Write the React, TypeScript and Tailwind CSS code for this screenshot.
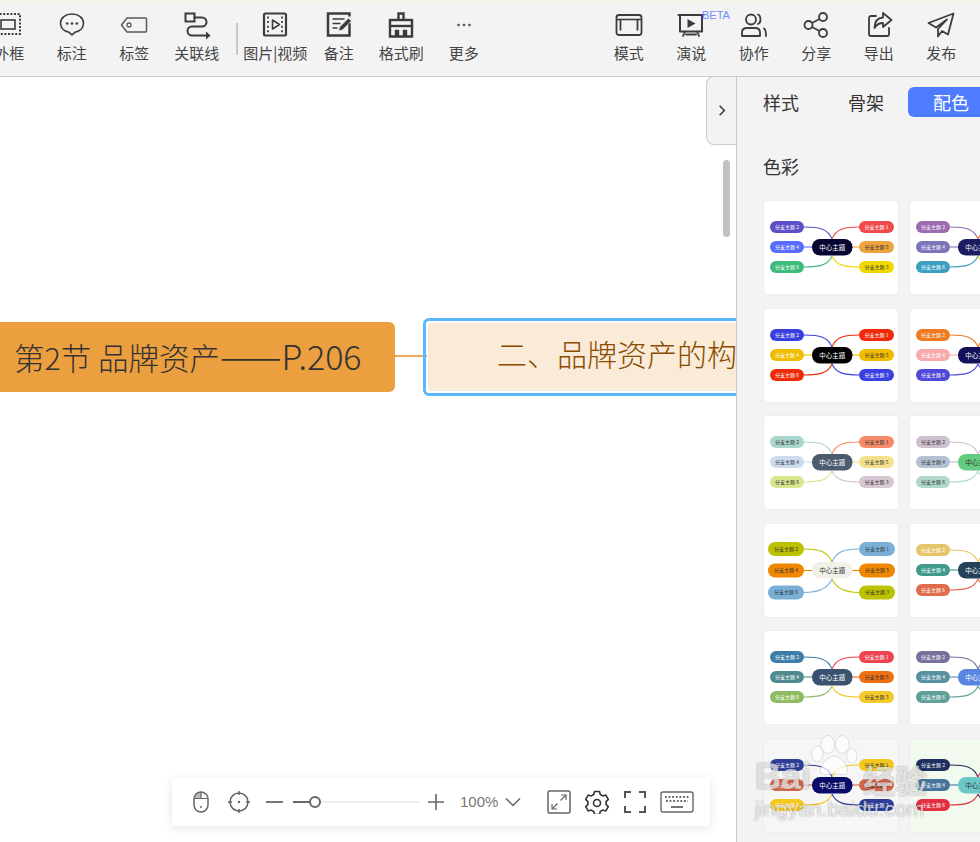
import type { ReactNode } from "react";

type Theme = {
  center: string;
  centerText: string;
  left: string[];
  right: string[];
  leftText?: string;
  rightText?: string[];
  big?: boolean;
  cardBg?: string;
};

const dark = "#333333";

const colOne: Theme[] = [
  { center: "#050530", centerText: "#fff", left: ["#5b50c8", "#5a6cff", "#3dbb7a"], right: ["#f04a4a", "#eda33f", "#f0d800"], rightText: ["#fff", dark, dark] },
  { center: "#000000", centerText: "#fff", left: ["#3a3fe0", "#f0bc00", "#ee2a08"], right: ["#ee2a08", "#f0bc00", "#3a3fe0"], rightText: ["#fff", dark, "#fff"] },
  { center: "#4d5b6e", centerText: "#fff", left: ["#a9d6cd", "#cddcef", "#d8e88e"], right: ["#f78a68", "#f5e08c", "#d8c6d2"], leftText: dark, rightText: [dark, dark, dark] },
  { center: "#f1f1e8", centerText: "#333", left: ["#bcc200", "#ef8800", "#7ab0d8"], right: ["#7ab0d8", "#ef8800", "#bcc200"], leftText: dark, rightText: [dark, dark, dark], big: true },
  { center: "#3a5170", centerText: "#fff", left: ["#3b7ea8", "#4e8a8e", "#8fbb60"], right: ["#ee4450", "#ef7010", "#f5c82c"], rightText: ["#fff", dark, dark] },
  { center: "#0b0b6a", centerText: "#fff", left: ["#2c3e98", "#d4674a", "#f5c820"], right: ["#f5c820", "#d4674a", "#2c3e98"], rightText: [dark, dark, "#fff"], cardBg: "bg-[#f6f6f6]" },
];

const colTwo: Theme[] = [
  { center: "#1c1c60", centerText: "#fff", left: ["#9c6bb0", "#7c74b8", "#3d9fc0"], right: ["#f07a20", "#f0c020", "#f0d800"] },
  { center: "#15105a", centerText: "#fff", left: ["#f07a20", "#f8aaaa", "#5048d8"], right: ["#f07a20", "#f8aaaa", "#5048d8"] },
  { center: "#64cc80", centerText: "#333", left: ["#cfc0d0", "#b4c0d4", "#b0d8cc"], right: ["#cfc0d0", "#b4c0d4", "#b0d8cc"], leftText: dark },
  { center: "#254358", centerText: "#fff", left: ["#e6c468", "#3f9a8c", "#e06c4c"], right: ["#e6c468", "#3f9a8c", "#e06c4c"] },
  { center: "#5b86e0", centerText: "#fff", left: ["#77709c", "#5890a0", "#60a098"], right: ["#77709c", "#5890a0", "#60a098"] },
  { center: "#6cc8c8", centerText: "#333", left: ["#1e2f60", "#45759c", "#e23040"], right: ["#e23040", "#45759c", "#1e2f60"], cardBg: "bg-[#f2f9ee]" },
];

function MiniMap({ t }: { t: Theme }) {
  const rows = t.big ? [25, 46.500, 68.500] : [26, 46, 66];
  const h = t.big ? 14 : 12;
  const lx = t.big ? 4 : 6;
  const lw = t.big ? 36 : 34;
  const rw = t.big ? 36 : 35;
  const labelsL = ["分支主题 2", "分支主题 4", "分支主题 6"];
  const labelsR = ["分支主题 1", "分支主题 5", "分支主题 3"];
  return (
    <svg viewBox="0 0 134 93" className="w-[134px] h-[93px] block">
      <g fill="none" strokeWidth="1.1">
        <path d={`M40 ${rows[0]} C56 ${rows[0]} 64 28 68 38`} stroke={t.left[0]} />
        <path d={`M40 ${rows[1]} L48 ${rows[1]}`} stroke={t.left[1]} />
        <path d={`M40 ${rows[2]} C56 ${rows[2]} 64 64 68 55`} stroke={t.left[2]} />
        <path d={`M95 ${rows[0]} C80 ${rows[0]} 72 28 68 38`} stroke={t.right[0]} />
        <path d={`M88 ${rows[1]} L95 ${rows[1]}`} stroke={t.right[1]} />
        <path d={`M95 ${rows[2]} C80 ${rows[2]} 72 64 68 55`} stroke={t.right[2]} />
      </g>
      {rows.map((y, i) => (
        <g key={i}>
          <rect x={lx} y={y - h / 2} width={lw} height={h} rx={h / 2} fill={t.left[i]} />
          <text x={lx + lw / 2} y={y + 1.8} fontSize="5" textAnchor="middle" fill={t.leftText ?? "#fff"}>{labelsL[i]}</text>
          <rect x={95} y={y - h / 2} width={rw} height={h} rx={h / 2} fill={t.right[i]} />
          <text x={95 + rw / 2} y={y + 1.8} fontSize="5" textAnchor="middle" fill={t.rightText?.[i] ?? "#fff"}>{labelsR[i]}</text>
        </g>
      ))}
      <rect x="48" y="38" width="40.5" height="16.5" rx="8" fill={t.center} />
      <text x="68.2" y="48.6" fontSize="6.5" textAnchor="middle" fill={t.centerText}>中心主题</text>
    </svg>
  );
}

const s = { fill: "none", stroke: "#3c3c3c", strokeWidth: 2, strokeLinecap: "round" as const, strokeLinejoin: "round" as const };

const icons: Record<string, ReactNode> = {
  frame: (
    <>
      <rect x="1" y="3" width="24" height="20" fill="none" stroke="#3c3c3c" strokeWidth="2" strokeDasharray="2 1.6" />
      <rect x="6" y="9" width="14" height="9" fill="none" stroke="#3c3c3c" strokeWidth="1.6" />
    </>
  ),
  note: (
    <>
      <path {...s} strokeWidth={1.6} d="M14 3C7.4 3 2.5 7 2.5 12.3c0 4.6 3.6 8 8.6 9l2.9 2.6 2.9-2.6c5-1 8.600-4.400 8.600-9C25.500 7 20.600 3 14 3z" />
      <circle cx="9.200" cy="12.500" r="1.300" fill="#3c3c3c" />
      <circle cx="14" cy="12.500" r="1.300" fill="#3c3c3c" />
      <circle cx="18.800" cy="12.500" r="1.300" fill="#3c3c3c" />
    </>
  ),
  tag: (
    <>
      <path fill="none" stroke="#5a5a5a" strokeWidth="1.500" strokeLinejoin="round" d="M7 7h18.500a1 1 0 0 1 1 1v12a1 1 0 0 1-1 1H7L1.500 14z" />
      <circle cx="9" cy="14" r="2" fill="none" stroke="#5a5a5a" strokeWidth="1.300" />
    </>
  ),
  link: (
    <>
      <rect x="2.500" y="2.500" width="9" height="8" fill="none" stroke="#3c3c3c" strokeWidth="2" />
      <path {...s} d="M11.500 6.500H19a4.500 4.500 0 0 1 0 9H9a4.500 4.500 0 0 0 0 9h15.500" />
      <path d="M23 20.500l4.500 4-4.500 4z" fill="#3c3c3c" />
    </>
  ),
  video: (
    <>
      <rect x="3" y="2.500" width="22" height="22" rx="1.500" fill="none" stroke="#3c3c3c" strokeWidth="2.200" />
      <path d="M11.500 9l7 4.500-7 4.500z" fill="none" stroke="#3c3c3c" strokeWidth="1.600" strokeLinejoin="round" />
      <path d="M7 5.500v16M21 5.500v16" fill="none" stroke="#3c3c3c" strokeWidth="1.800" strokeDasharray="2 2.600" />
    </>
  ),
  memo: (
    <>
      <path fill="none" stroke="#3c3c3c" strokeWidth="2.500" d="M24.500 12v12.500H3V2.500h21.500v3" />
      <path d="M7.500 8h12M7.500 12.500h8M7.500 17h5" stroke="#3c3c3c" strokeWidth="1.600" fill="none" />
      <path d="M13.500 20l1-4L23.500 7l3 3-9 9z" fill="#3c3c3c" stroke="#f3f3f3" strokeWidth="0.800" />
    </>
  ),
  brush: (
    <>
      <path fill="none" stroke="#3c3c3c" strokeWidth="2.400" d="M11.500 9V2.500h5V9" />
      <rect x="3" y="9" width="22" height="6" fill="none" stroke="#3c3c3c" strokeWidth="2.400" />
      <path fill="none" stroke="#3c3c3c" strokeWidth="2.400" d="M3 15v10.500h6V20h2v5.500h6V20h2v5.500h6V15" />
    </>
  ),
  more: (
    <>
      <circle cx="8.500" cy="14" r="1.300" fill="#555" />
      <circle cx="14" cy="14" r="1.300" fill="#555" />
      <circle cx="19.500" cy="14" r="1.300" fill="#555" />
    </>
  ),
  mode: (
    <>
      <rect x="1.500" y="4" width="25" height="20" rx="2.500" fill="none" stroke="#3c3c3c" strokeWidth="1.800" />
      <path d="M2 8.500h24" stroke="#3c3c3c" strokeWidth="1.600" fill="none" />
      <path d="M5.500 9v10.500M22.500 9v10.500" stroke="#3c3c3c" strokeWidth="1.800" fill="none" />
    </>
  ),
  present: (
    <>
      <path {...s} strokeWidth={2} d="M3 4h22v16.500H3zM1.500 4h25" />
      <path d="M10.500 8l8 4.500-8 4.500z" fill="#3c3c3c" />
      <path {...s} strokeWidth={1.800} d="M8 20.500L6 25M20 20.500l2 4.500M9 23.500h10" />
    </>
  ),
  team: (
    <>
      <circle cx="11" cy="8.500" r="5" fill="none" stroke="#3c3c3c" strokeWidth="1.800" />
      <path {...s} strokeWidth={1.800} d="M2 25v-3.500c0-3 2-4.500 5-4.500h8c3 0 5 1.500 5 4.500V25zM18 3.500c3 1 3.500 8 0 9.500M24 17.500c1.500 1 2 3 2 7.500" />
    </>
  ),
  share: (
    <>
      <circle cx="6.500" cy="14" r="4" fill="none" stroke="#3c3c3c" strokeWidth="1.800" />
      <circle cx="21" cy="6" r="4" fill="none" stroke="#3c3c3c" strokeWidth="1.800" />
      <circle cx="21" cy="22" r="4" fill="none" stroke="#3c3c3c" strokeWidth="1.800" />
      <path d="M10 12l7.500-4M10 16l7.500 4" stroke="#3c3c3c" strokeWidth="1.800" fill="none" />
    </>
  ),
  export: (
    <>
      <path {...s} strokeWidth={1.800} d="M11 5H6a2 2 0 0 0-2 2v16a2 2 0 0 0 2 2h16a2 2 0 0 0 2-2v-6" />
      <path d="M18 2l8.500 7-8.500 7v-4c-4 0-6.500 1.500-8.500 5 0-6 3-10 8.500-10.500z" fill="none" stroke="#3c3c3c" strokeWidth="1.800" strokeLinejoin="round" />
    </>
  ),
  send: (
    <>
      <path {...s} strokeWidth={1.800} d="M26.500 2.500L1.500 12l7.500 4.500L20 8.500l-9 9.500v7.500l4-5.500 6 3.500z" />
    </>
  ),
};

function Tool({ icon, label }: { icon: string; label: string }) {
  return (
    <div className="w-[62.500px] flex flex-col items-center shrink-0">
      <svg viewBox="0 0 28 28" className="w-[28px] h-[28px] overflow-visible">
        {icons[icon]}
      </svg>
      <span className="mt-[4px] text-[15px] leading-[20px] text-[#444] whitespace-nowrap">{label}</span>
    </div>
  );
}

export default function App() {
  return (
    <div className="relative w-[980px] h-[842px] overflow-hidden bg-white flex flex-col font-['Noto_Sans_CJK_SC','Noto_Sans',sans-serif]">
      <header className="h-[77px] shrink-0 bg-[#f3f3f3] border-t-2 border-t-[#f0f8e8] border-b border-b-[#cccccc] flex items-start pt-[9px] overflow-hidden">
        <div className="flex -ml-[22px] shrink-0">
          <Tool icon="frame" label="外框" />
          <Tool icon="note" label="标注" />
          <Tool icon="tag" label="标签" />
          <Tool icon="link" label="关联线" />
        </div>
        <div className="w-[2px] h-[32px] bg-[#c8c8c8] mt-[12px] ml-[8px] mr-[6px] shrink-0" />
        <div className="flex shrink-0">
          <Tool icon="video" label="图片|视频" />
          <div className="flex ml-[1px]">
            <Tool icon="memo" label="备注" />
            <Tool icon="brush" label="格式刷" />
            <Tool icon="more" label="更多" />
          </div>
        </div>
        <div className="flex ml-auto mr-[7.500px] shrink-0">
          <Tool icon="mode" label="模式" />
          <div className="relative">
            <Tool icon="present" label="演说" />
            <span className="absolute left-[42px] top-[-2px] text-[11px] leading-[12px] text-[#6f8dff] font-['Liberation_Sans',sans-serif]">BETA</span>
          </div>
          <Tool icon="team" label="协作" />
          <Tool icon="share" label="分享" />
          <Tool icon="export" label="导出" />
          <Tool icon="send" label="发布" />
        </div>
      </header>

      <div className="flex flex-1 min-h-0">
        <main className="relative flex-1 overflow-hidden bg-white">
          {/* mind map nodes */}
          <div className="absolute left-[-30px] top-[245px] w-[425px] h-[70px] rounded-[6px] bg-[#ec9f3f] flex items-center pl-[44px] pb-[4px]">
            <span className="text-[30.500px] font-light text-[#333] whitespace-nowrap">
              第2节 品牌资产<span className="text-[37px]">——</span><span className="text-[34px]">P.206</span>
            </span>
          </div>
          <div className="absolute left-[395px] top-[278px] w-[32px] h-[2px] bg-[#f0a95c]" />
          <div className="absolute left-[423px] top-[241px] w-[340px] h-[78px] rounded-[6px] border-[3px] border-[#5bb8ff] p-[2px]">
            <div className="h-full rounded-[4px] bg-[#faebd9] flex items-center pl-[69px] pb-[8px]">
              <span className="text-[30px] font-light text-[#8a4b00] whitespace-nowrap">二、品牌资产的构</span>
            </div>
          </div>

          <div className="absolute left-[723px] top-[83px] w-[7px] h-[77px] rounded-full bg-[#c1c1c1]" />

          <div className="absolute left-[706px] top-[-1px] w-[31px] h-[69px] bg-[#f3f3f3] border border-r-0 border-[#cccccc] rounded-l-[8px] flex items-center justify-center">
            <svg viewBox="0 0 10 16" className="w-[8px] h-[13px]">
              <path d="M2 2l6 6-6 6" fill="none" stroke="#333" strokeWidth="1.800" />
            </svg>
          </div>

          {/* bottom zoom bar */}
          <div className="absolute left-[172px] top-[701px] w-[538px] h-[48px] bg-white rounded-[4px] shadow-[0_2px_12px_rgba(0,0,0,0.1)] flex items-center text-[#666]">
            <svg viewBox="0 0 20 24" className="w-[20px] h-[24px] ml-[19px]">
              <path d="M10 2a7 6 0 0 0-7 6h7z" fill="#bbbbbb" />
              <rect x="3" y="2" width="14" height="20" rx="7" fill="none" stroke="#666" strokeWidth="1.500" />
              <path d="M3 8.500h14M10 2v6.500" stroke="#666" strokeWidth="1.200" fill="none" />
              <circle cx="10" cy="17" r="1" fill="#666" />
            </svg>
            <svg viewBox="0 0 24 24" className="w-[24px] h-[24px] ml-[16px]">
              <circle cx="12" cy="12" r="9" fill="none" stroke="#666" strokeWidth="1.500" />
              <path d="M12 1v4M12 19v4M1 12h4M19 12h4" stroke="#666" strokeWidth="1.500" />
              <circle cx="12" cy="12" r="1.200" fill="#666" />
            </svg>
            <div className="w-[17px] h-[2px] bg-[#777] ml-[15px]" />
            <div className="relative w-[127px] h-[2px] bg-[#f0f0f0] ml-[10px]">
              <div className="absolute left-0 top-0 w-[18px] h-[2px] bg-[#666]" />
              <div className="absolute left-[16px] top-[-5px] w-[12px] h-[12px] rounded-full bg-white border-2 border-[#666]" />
            </div>
            <svg viewBox="0 0 16 16" className="w-[16px] h-[16px] ml-[8px]">
              <path d="M8 0v16M0 8h16" stroke="#666" strokeWidth="1.600" />
            </svg>
            <span className="ml-[16px] text-[15px] leading-[20px] text-[#777] font-['Liberation_Sans',sans-serif]">100%</span>
            <svg viewBox="0 0 16 10" className="w-[16px] h-[10px] ml-[7px]">
              <path d="M1 1.500l7 7 7-7" fill="none" stroke="#666" strokeWidth="1.500" />
            </svg>
            <svg viewBox="0 0 24 24" className="w-[24px] h-[24px] ml-[26px]">
              <rect x="1" y="1" width="22" height="22" rx="1.500" fill="none" stroke="#666" strokeWidth="1.500" />
              <path d="M14 5h5v5M19 5l-5.500 5.500M10 19H5v-5M5 19l5.500-5.500" fill="none" stroke="#666" strokeWidth="1.200" />
            </svg>
            <svg viewBox="0 0 24 24" className="w-[24px] h-[24px] ml-[14px]">
              <path d="M9.500 1.500h5l.8 3 2.500 1.400 3-.8 2.500 4.300-2.200 2.200v2.800l2.200 2.200-2.500 4.300-3-.8-2.500 1.400-.8 3h-5l-.8-3-2.500-1.400-3 .8L.7 16.600l2.200-2.200v-2.800L.7 9.400l2.500-4.300 3 .8 2.500-1.400z" fill="none" stroke="#333" strokeWidth="1.600" strokeLinejoin="round" />
              <circle cx="12" cy="13" r="3.500" fill="none" stroke="#333" strokeWidth="1.600" />
            </svg>
            <svg viewBox="0 0 22 22" className="w-[22px] h-[22px] ml-[15px]">
              <path d="M1 7V1h6M15 1h6v6M21 15v6h-6M7 21H1v-6" fill="none" stroke="#555" strokeWidth="2" />
            </svg>
            <svg viewBox="0 0 34 24" className="w-[34px] h-[24px] ml-[14px]">
              <rect x="1" y="2" width="32" height="20" rx="2" fill="none" stroke="#666" strokeWidth="1.400" />
              <path d="M5 7h24M6 11h22" stroke="#666" strokeWidth="1.800" strokeDasharray="1.800 1.800" fill="none" />
              <path d="M11 17h12" stroke="#666" strokeWidth="1.800" fill="none" />
            </svg>
          </div>
        </main>

        <aside className="relative w-[244px] shrink-0 bg-[#f3f3f3] border-l border-l-[#cccccc] overflow-hidden">
          <div className="flex items-center h-[30px] mt-[10px] ml-[26px] text-[18px] text-[#333]">
            <span className="w-[85px] shrink-0">样式</span>
            <span className="w-[60px] shrink-0">骨架</span>
            <span className="w-[86px] shrink-0 h-[30px] rounded-l-[6px] bg-[#4d7cfe] text-white text-center leading-[30px]">配色</span>
          </div>
          <div className="mt-[35px] ml-[26px] text-[18px] leading-[28px] text-[#333]">色彩</div>
          <div className="mt-[21px] ml-[27px] grid grid-cols-[134px_134px] gap-x-[12px] gap-y-[14.500px] w-[280px]">
            {colOne.map((t, i) => (
              <div key={i} className="contents">
                <div className={`rounded-[4px] shadow-[0_0_2px_rgba(0,0,0,0.08)] ${t.cardBg ?? "bg-white"}`}>
                  <MiniMap t={t} />
                </div>
                <div className={`rounded-[4px] shadow-[0_0_2px_rgba(0,0,0,0.08)] ${colTwo[i].cardBg ?? "bg-white"}`}>
                  <MiniMap t={colTwo[i]} />
                </div>
              </div>
            ))}
          </div>
        </aside>
      </div>

      {/* baidu watermark */}
      <div className="absolute left-[755px] top-[735px] w-[180px] h-[90px] pointer-events-none text-white/70 [text-shadow:0_0_2px_rgba(0,0,0,0.4)]">
        <svg viewBox="0 0 44 40" className="absolute left-[56px] top-0 w-[46px] h-[42px]">
          <g fill="rgba(255,255,255,0.7)" stroke="rgba(120,120,120,0.35)" strokeWidth="0.600">
            <ellipse cx="6" cy="18" rx="5.500" ry="7.500" />
            <ellipse cx="16" cy="9" rx="6.500" ry="8.500" />
            <ellipse cx="30" cy="9" rx="6.500" ry="8.500" />
            <ellipse cx="39" cy="20" rx="5" ry="7" />
            <path d="M22 20c6 0 13 8 13 14 0 5-7 4-13 3-6 1-13 2-13-3 0-6 7-14 13-14z" />
          </g>
        </svg>
        <span className="absolute left-0 top-[23px] text-[36px] leading-[38px] font-bold font-['Liberation_Sans',sans-serif]">Bai</span>
        <span className="absolute left-[108px] top-[25px] text-[32px] leading-[38px] font-bold">经验</span>
        <span className="absolute left-0 top-[62px] text-[21px] leading-[24px] whitespace-nowrap font-['Liberation_Sans',sans-serif]">jingyan.baidu.com</span>
      </div>
    </div>
  );
}
